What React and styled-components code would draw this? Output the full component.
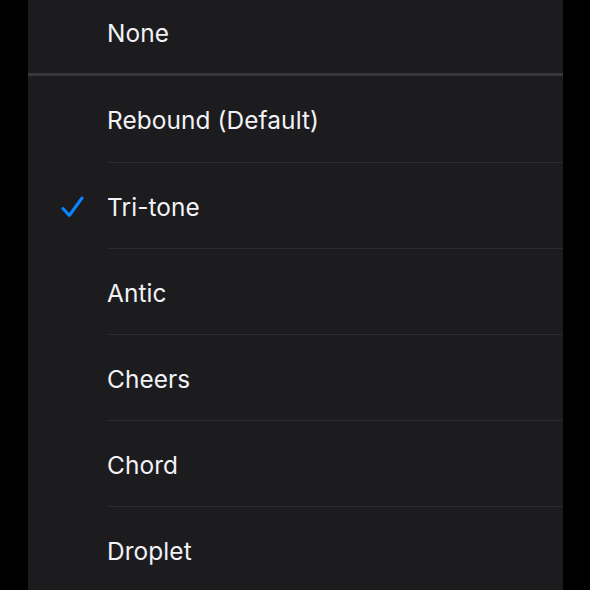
import React from 'react';
import styled, { createGlobalStyle } from 'styled-components';

const GlobalStyle = createGlobalStyle`
  html, body {
    margin: 0;
    padding: 0;
    background: #000;
  }
  body {
    font-family: Inter, "Noto Sans", "Liberation Sans", sans-serif;
    -webkit-font-smoothing: antialiased;
  }
`;

const Screen = styled.div`
  width: 590px;
  height: 590px;
  overflow: hidden;
  background: #000;
`;

const Panel = styled.ul`
  list-style: none;
  margin: -9px 0 0 28px;
  padding: 0;
  width: 535px;
  background: #1c1c1e;
`;

const Row = styled.li`
  display: flex;
  align-items: stretch;
  height: ${({ $heavy }) => ($heavy ? '85px' : '86px')};
  box-sizing: border-box;
  border-bottom: ${({ $heavy }) => ($heavy ? '3px solid #38383a' : 'none')};
`;

const CheckSlot = styled.span`
  width: 79px;
  flex: none;
  display: flex;
  align-items: center;
  justify-content: flex-end;
  padding: 3px 23px 0 0;
  box-sizing: border-box;
`;

const Content = styled.div`
  flex: 1;
  display: flex;
  align-items: center;
  padding-top: ${({ $first }) => ($first ? '3px' : '4px')};
  box-sizing: border-box;
  border-top: ${({ $first }) => ($first ? 'none' : '1px solid #2b2b2d')};
`;

const Label = styled.span`
  color: #f2f2f7;
  font-size: 24.4px;
  letter-spacing: 0.1px;
  line-height: 1;
`;

const Check = () => (
  <svg width="23" height="22" viewBox="0 0 23 22" fill="none">
    <path
      d="M2 12.5 L8.3 19.5 L21 2"
      stroke="#0a84ff"
      strokeWidth="3"
      strokeLinecap="round"
      strokeLinejoin="round"
    />
  </svg>
);

const tones = ['Rebound (Default)', 'Tri-tone', 'Antic', 'Cheers', 'Chord', 'Droplet'];

export default function App() {
  const selected = 'Tri-tone';
  return (
    <Screen>
      <GlobalStyle />
      <Panel>
        <Row $heavy>
          <CheckSlot />
          <Content $first>
            <Label>None</Label>
          </Content>
        </Row>
        {tones.map((name, i) => (
          <Row key={name}>
            <CheckSlot>{name === selected && <Check />}</CheckSlot>
            <Content $first={i === 0}>
              <Label>{name}</Label>
            </Content>
          </Row>
        ))}
      </Panel>
    </Screen>
  );
}
